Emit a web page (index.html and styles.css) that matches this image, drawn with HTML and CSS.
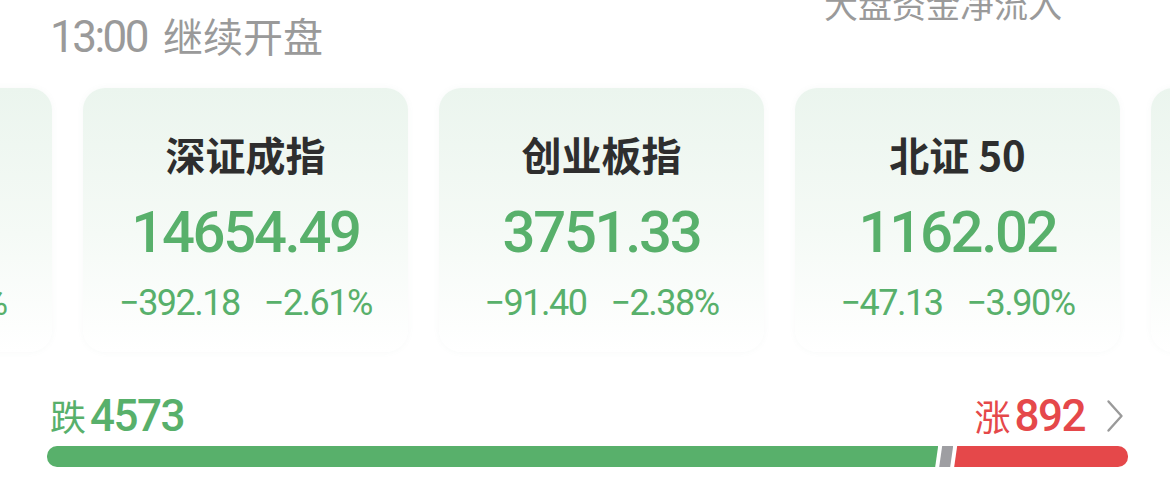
FILE: index.html
```html
<!DOCTYPE html>
<html lang="zh-CN">
<head>
<meta charset="utf-8">
<title>大盘行情</title>
<link rel="stylesheet" href="styles.css">
</head>
<body>
<div class="page">
  <header class="head">
    <div class="session"><span class="time">13:00</span><span class="status">继续开盘</span></div>
    <div class="flow">大盘资金净流入</div>
  </header>

  <div class="strip">
    <div class="card">
      <div class="name">上证指数</div>
      <div class="price">3211.24</div>
      <div class="chg"><span>−66.01</span><span class="pct">−2.01%</span></div>
    </div>
    <div class="card">
      <div class="name">深证成指</div>
      <div class="price">14654.49</div>
      <div class="chg"><span>−392.18</span><span class="pct">−2.61%</span></div>
    </div>
    <div class="card">
      <div class="name">创业板指</div>
      <div class="price">3751.33</div>
      <div class="chg"><span>−91.40</span><span class="pct">−2.38%</span></div>
    </div>
    <div class="card">
      <div class="name">北证 50</div>
      <div class="price">1162.02</div>
      <div class="chg"><span>−47.13</span><span class="pct">−3.90%</span></div>
    </div>
    <div class="card">
      <div class="name">科创50</div>
      <div class="price">912.35</div>
      <div class="chg"><span>−18.20</span><span class="pct">−1.96%</span></div>
    </div>
  </div>

  <div class="stats">
    <div class="count down"><span class="lbl">跌</span><span class="num">4573</span></div>
    <div class="right">
      <div class="count up"><span class="lbl">涨</span><span class="num">892</span></div>
      <svg class="chev" width="18" height="34" viewBox="0 0 18 34"><path d="M2.5 2.5 L15.5 17 L2.5 31.5" fill="none" stroke="#9a9a9a" stroke-width="2.4" stroke-linecap="round" stroke-linejoin="round"/></svg>
    </div>
  </div>

  <div class="bar">
    <div class="seg seg-down" style="flex-grow:4573"></div>
    <div class="seg seg-flat"></div>
    <div class="seg seg-up" style="flex-grow:892"></div>
  </div>
</div>
</body>
</html>
```

FILE: styles.css
```css
html, body {
  margin: 0;
  padding: 0;
  background: #ffffff;
}

body {
  width: 1170px;
  height: 479px;
  overflow: hidden;
  font-family: Roboto, "Noto Sans CJK SC", sans-serif;
}

.page {
  display: flex;
  flex-direction: column;
}

/* top header */
.head {
  display: flex;
  justify-content: space-between;
  align-items: flex-start;
  height: 88px;
  padding: 0 108px 0 50px;
}

.session {
  margin-top: 7px;
  line-height: 56px;
  color: #9a9a9a;
  white-space: nowrap;
}

.time {
  font-family: Roboto, sans-serif;
  font-size: 44px;
  letter-spacing: -2.5px;
}

.status {
  font-family: "Noto Sans CJK SC", sans-serif;
  font-size: 40px;
  margin-left: 16px;
}

.flow {
  margin-top: -16px;
  font-family: "Noto Sans CJK SC", sans-serif;
  font-size: 34px;
  line-height: 40px;
  color: #9a9a9a;
  white-space: nowrap;
}

/* index cards */
.strip {
  display: flex;
  gap: 31px;
  margin-left: -273px;
}

.card {
  flex: 0 0 325px;
  height: 264px;
  box-sizing: border-box;
  padding-top: 42px;
  border-radius: 22px;
  background: linear-gradient(180deg, #ebf5ee 0%, #f5faf6 55%, #ffffff 100%);
  box-shadow: 0 0 6px rgba(120, 150, 130, 0.06);
  display: flex;
  flex-direction: column;
  align-items: center;
}

.name {
  font-family: "Noto Sans CJK SC", sans-serif;
  font-weight: 700;
  font-size: 40px;
  line-height: 48px;
  color: #2e2e2e;
  white-space: nowrap;
}

.price {
  margin-top: 22px;
  font-family: Roboto, sans-serif;
  font-weight: 500;
  font-size: 58px;
  line-height: 64px;
  letter-spacing: -2.3px;
  color: #58b06b;
}

.chg {
  margin-top: 19px;
  font-family: Roboto, sans-serif;
  font-size: 36px;
  line-height: 40px;
  letter-spacing: -1.5px;
  color: #58b06b;
  white-space: nowrap;
}

.chg .pct {
  margin-left: 24px;
}

/* advance / decline */
.stats {
  display: flex;
  justify-content: space-between;
  align-items: center;
  margin-top: 39px;
  padding: 0 46px 0 50px;
  height: 48px;
}

.right {
  display: flex;
  align-items: center;
  gap: 21px;
}

.count {
  display: flex;
  align-items: baseline;
  line-height: 48px;
  white-space: nowrap;
}

.count .lbl {
  font-family: "Noto Sans CJK SC", sans-serif;
  font-size: 36px;
  margin-right: 4px;
}

.count .num {
  font-family: Roboto, sans-serif;
  font-weight: 500;
  font-size: 44px;
  letter-spacing: -1.5px;
}

.down { color: #58b06b; }
.up { color: #e5484a; }

.chev {
  display: block;
  margin-top: 1px;
}

.bar {
  display: flex;
  gap: 1px;
  margin: 7px 42px 0 47px;
  height: 21px;
}

.seg {
  flex-basis: 0;
  height: 100%;
}

.seg-down {
  background: #58b06b;
  border-radius: 10px 0 0 10px;
  clip-path: polygon(0 0, 100% 0, calc(100% - 3px) 100%, 0 100%);
}

.seg-flat {
  flex: 0 0 14px;
  background: #9e9ea2;
  clip-path: polygon(3px 0, 100% 0, calc(100% - 3px) 100%, 0 100%);
}

.seg-up {
  background: #e5484a;
  border-radius: 0 10px 10px 0;
  clip-path: polygon(3px 0, 100% 0, 100% 100%, 0 100%);
}
```
